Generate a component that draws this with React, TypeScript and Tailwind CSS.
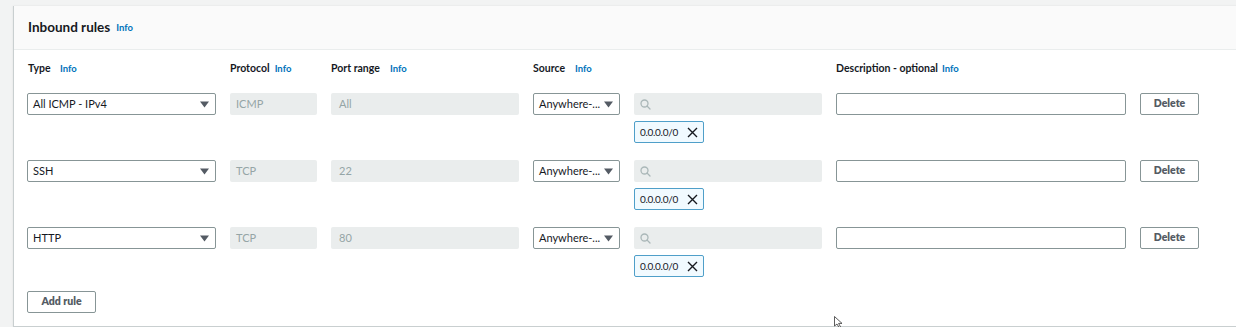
import React from "react";

const font = { fontFamily: 'Lato, "Noto Sans", Arial, sans-serif' };

function Info({ className = "" }: { className?: string }) {
  return <span className={`text-[9.5px] font-bold text-[#0073bb] ${className}`}>Info</span>;
}

function Caret() {
  return (
    <svg width="9" height="7" viewBox="0 0 9 7" className="shrink-0">
      <path d="M0 0.5 H9 L4.5 6.5 Z" fill="#545b64" />
    </svg>
  );
}

function SearchIcon() {
  return (
    <svg width="11" height="11" viewBox="0 0 11 11" fill="none" stroke="#aab7b8" strokeWidth="1.3">
      <circle cx="4.5" cy="4.5" r="3.5" />
      <path d="M7 7 L10 10" strokeLinecap="round" />
    </svg>
  );
}

function XIcon() {
  return (
    <svg width="11" height="11" viewBox="0 0 11 11" fill="none" stroke="#16191f" strokeWidth="1.4" className="shrink-0">
      <path d="M1 1 L10 10 M10 1 L1 10" />
    </svg>
  );
}

type Rule = { type: string; proto: string; port: string };

const rules: Rule[] = [
  { type: "All ICMP - IPv4", proto: "ICMP", port: "All" },
  { type: "SSH", proto: "TCP", port: "22" },
  { type: "HTTP", proto: "TCP", port: "80" },
];

function RuleRow({ r }: { r: Rule }) {
  return (
    <div className="flex flex-col gap-[6px]">
      <div className="flex h-[22px] gap-[14px]">
        <div className="flex w-[189px] items-center justify-between rounded-[2px] border border-[#879596] bg-white pl-[5px] pr-[6px] text-[11px] text-[#16191f]">
          <span>{r.type}</span>
          <Caret />
        </div>
        <div className="flex w-[87px] items-center rounded-[2px] bg-[#eaeded] px-[6px] text-[11px] text-[#95a5a6]">
          {r.proto}
        </div>
        <div className="flex w-[188px] items-center rounded-[2px] bg-[#eaeded] px-[8px] text-[11px] text-[#95a5a6]">
          {r.port}
        </div>
        <div className="flex w-[87px] items-center justify-between rounded-[2px] border border-[#879596] bg-white pl-[5px] pr-[6px] text-[11px] text-[#16191f]">
          <span>Anywhere-...</span>
          <Caret />
        </div>
        <div className="flex w-[188px] items-center rounded-[2px] bg-[#eaeded] px-[6px]">
          <SearchIcon />
        </div>
        <div className="w-[290px] rounded-[2px] border border-[#879596] bg-white" />
        <div className="flex w-[59px] items-center justify-center rounded-[2px] border border-[#879596] bg-white text-[10.5px] font-extrabold text-[#545b64]">
          Delete
        </div>
      </div>
      <div className="flex">
        <div className="ml-[607px] flex h-[22px] w-[70px] items-center justify-between rounded-[2px] border border-[#4f9fc9] bg-[#f1faff] pl-[5px] pr-[5px] text-[10px] tracking-[-0.3px] text-[#16191f]">
          <span>0.0.0.0/0</span>
          <XIcon />
        </div>
      </div>
    </div>
  );
}

export default function App() {
  return (
    <div style={font} className="relative h-[327px] w-[1236px] overflow-hidden bg-[#f2f3f3] pt-[6px] pl-[13px]">
      <div className="h-[321px] w-[1240px] border-b border-l border-[#c9cfd0] bg-white shadow-[0_0_2px_rgba(0,0,0,0.08)]">
        <div className="flex h-[44px] items-center gap-[6px] border-b border-[#eaeded] bg-[#fafafa] pl-[14px]">
          <span className="text-[13.5px] font-bold text-[#16191f]">Inbound rules</span>
          <Info className="mt-[2px]" />
        </div>
        <div className="pl-[13px] pt-[12px]">
          <div className="flex h-[14px] items-center text-[10.5px] font-bold text-[#16191f]">
            <div className="flex w-[203px] items-center pl-[1px]">
              <span className="w-[32px]">Type</span>
              <Info />
            </div>
            <div className="flex w-[101px] items-center gap-[5px]">
              <span>Protocol</span>
              <Info />
            </div>
            <div className="flex w-[202px] items-center">
              <span className="w-[59px]">Port range</span>
              <Info />
            </div>
            <div className="flex w-[303px] items-center">
              <span className="w-[42px]">Source</span>
              <Info />
            </div>
            <div className="flex items-center gap-[4px]">
              <span>Description - optional</span>
              <Info />
            </div>
          </div>
          <div className="mt-[17px] flex flex-col gap-[17px]">
            {rules.map((r) => (
              <RuleRow key={r.type} r={r} />
            ))}
          </div>
          <div className="mt-[14px] flex h-[22px] w-[69px] items-center justify-center rounded-[2px] border border-[#879596] bg-white text-[10.5px] font-extrabold text-[#545b64]">
            Add rule
          </div>
        </div>
      </div>
      <svg className="absolute left-[834px] top-[316px]" width="10" height="12" viewBox="0 0 10 12">
        <path d="M0.5 0.5 L0.5 10 L3 8 L5 11.5 L6.5 10.8 L4.6 7.4 L8 7.4 Z" fill="white" stroke="#333" strokeWidth="0.8" />
      </svg>
    </div>
  );
}
